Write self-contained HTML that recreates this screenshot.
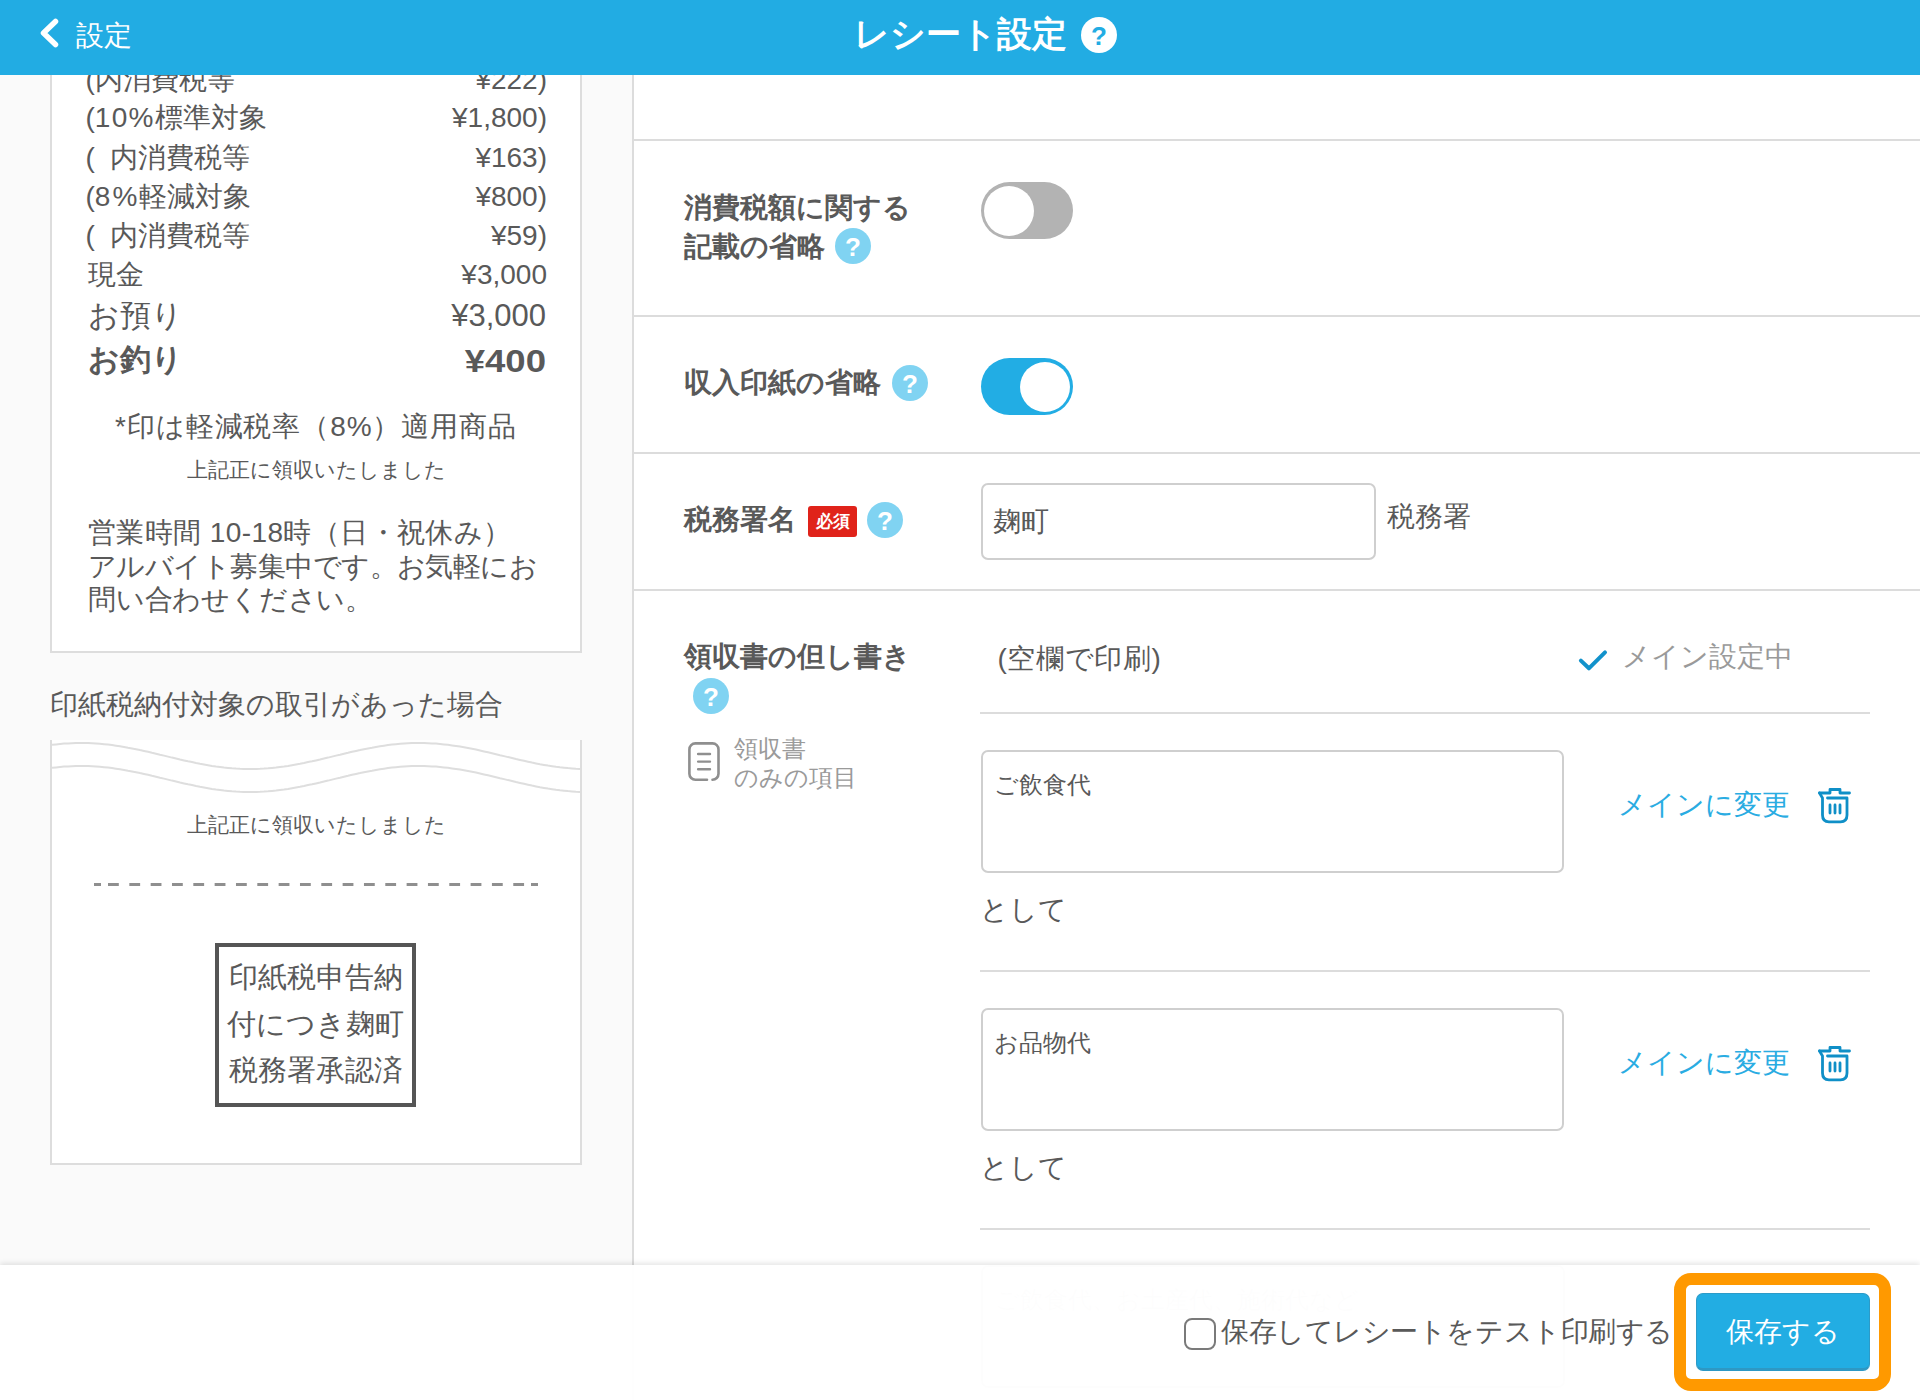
<!DOCTYPE html>
<html lang="ja">
<head>
<meta charset="utf-8">
<style>
html,body{margin:0;padding:0;width:1920px;height:1400px;overflow:hidden;background:#fff;}
body{position:relative;font-family:"Liberation Sans",sans-serif;color:#595959;}
.a{position:absolute;white-space:nowrap;}
.t28{font-size:28px;line-height:40px;height:40px;}
.r{text-align:right;}
.c{text-align:center;}
.b{font-weight:bold;}
#left{position:absolute;left:0;top:0;width:632px;height:1400px;background:#fafafa;}
#vline{position:absolute;left:632px;top:0;width:2px;height:1400px;background:#dcdcdc;}
.hl{position:absolute;height:2px;background:#dcdcdc;}
.card{position:absolute;background:#fff;border:2px solid #dddddd;box-sizing:border-box;}
#header{position:absolute;left:0;top:0;width:1920px;height:75px;background:#22ace3;z-index:10;}
.help{position:absolute;width:36px;height:36px;border-radius:50%;background:#80d3f2;color:#fff;font-weight:bold;font-size:26px;line-height:38px;text-align:center;}
.toggle{position:absolute;width:92px;height:57px;border-radius:29px;box-sizing:border-box;}
.knob{position:absolute;top:3.5px;width:50px;height:50px;border-radius:50%;background:#fff;}
.inp{position:absolute;border:2px solid #cfcfcf;border-radius:7px;box-sizing:border-box;background:#fff;}
.blue{color:#2aace2;}
#bar{position:absolute;left:0;top:1265px;width:1920px;height:135px;background:rgba(255,255,255,0.96);box-shadow:0 -2px 5px rgba(0,0,0,0.10);z-index:20;}
</style>
</head>
<body>
<div id="left"></div>
<div id="vline"></div>

<!-- header -->
<div id="header">
  <svg class="a" style="left:36px;top:14px" width="28" height="38" viewBox="0 0 28 38"><path d="M19.5 7.5 L7.5 19 L19.5 30.5" fill="none" stroke="#fff" stroke-width="5.5" stroke-linecap="round" stroke-linejoin="round"/></svg>
  <div class="a" style="left:76px;top:16px;font-size:28px;line-height:40px;color:#fff">設定</div>
  <div class="a b" style="left:854px;top:14px;font-size:35px;line-height:40px;color:#fff">レシート設定</div>
  <div class="help" style="left:1081px;top:17px;background:#fff;color:#22ace3;">?</div>
</div>

<!-- left receipt card 1 -->
<div class="card" style="left:50px;top:-20px;width:532px;height:673px;"></div>

<!-- receipt rows -->
<div class="a t28" style="left:85.5px;top:60px">(内消費税等</div>
<div class="a t28 r" style="left:300px;width:247px;top:60px">¥222)</div>
<div class="a t28" style="left:85.5px;top:98px">(<span style="letter-spacing:1.3px">10%</span>標準対象</div>
<div class="a t28 r" style="left:300px;width:247px;top:98px">¥1,800)</div>
<div class="a t28" style="left:85.5px;top:138px">(&nbsp;&nbsp;内消費税等</div>
<div class="a t28 r" style="left:300px;width:247px;top:138px">¥163)</div>
<div class="a t28" style="left:85.5px;top:177px">(<span style="letter-spacing:2px">8%</span>軽減対象</div>
<div class="a t28 r" style="left:300px;width:247px;top:177px">¥800)</div>
<div class="a t28" style="left:85.5px;top:216px">(&nbsp;&nbsp;内消費税等</div>
<div class="a t28 r" style="left:300px;width:247px;top:216px">¥59)</div>
<div class="a t28" style="left:88px;top:255px">現金</div>
<div class="a t28 r" style="left:300px;width:247px;top:255px">¥3,000</div>
<div class="a" style="left:88px;top:296px;font-size:31px;line-height:40px">お預り</div>
<div class="a r" style="left:300px;width:246px;top:296px;font-size:31px;line-height:40px">¥3,000</div>
<div class="a b" style="left:88px;top:340px;font-size:31px;line-height:40px">お釣り</div>
<div class="a b r" style="left:300px;width:246px;top:341px;font-size:31.5px;line-height:40px;transform:scaleX(1.16);transform-origin:100% 50%">¥400</div>
<div class="a t28 c" style="left:50px;width:532px;top:407px;letter-spacing:0.9px">*印は軽減税率（8%）適用商品</div>
<div class="a c" style="left:50px;width:532px;top:455px;font-size:21px;line-height:30px">上記正に領収いたしました</div>
<div class="a" style="left:88px;top:516px;font-size:28px;line-height:33.5px"><span style="letter-spacing:0.4px">営業時間 10-18時（日・祝休み）</span><br><span style="letter-spacing:-0.55px">アルバイト募集中です。お気軽にお</span><br><span style="letter-spacing:-0.2px">問い合わせください。</span></div>

<div class="a t28" style="left:50px;top:685px">印紙税納付対象の取引があった場合</div>

<!-- card 2 -->
<div class="card" style="left:50px;top:740px;width:532px;height:425px;border-top:none"></div>
<svg class="a" style="left:52px;top:735px" width="528" height="70" viewBox="52 735 528 70">
  <path id="wv" d="M52,744.8 L56,744.4 L60,744.0 L64,743.6 L68,743.4 L72,743.2 L76,743.1 L80,743.0 L84,743.0 L88,743.1 L92,743.3 L96,743.5 L100,743.8 L104,744.2 L108,744.6 L112,745.1 L116,745.7 L120,746.3 L124,746.9 L128,747.7 L132,748.4 L136,749.2 L140,750.1 L144,750.9 L148,751.8 L152,752.8 L156,753.7 L160,754.7 L164,755.6 L168,756.6 L172,757.6 L176,758.5 L180,759.5 L184,760.4 L188,761.3 L192,762.1 L196,763.0 L200,763.8 L204,764.5 L208,765.2 L212,765.9 L216,766.5 L220,767.0 L224,767.5 L228,767.9 L232,768.3 L236,768.6 L240,768.8 L244,768.9 L248,769.0 L252,769.0 L256,768.9 L260,768.8 L264,768.6 L268,768.3 L272,767.9 L276,767.5 L280,767.0 L284,766.5 L288,765.9 L292,765.2 L296,764.5 L300,763.8 L304,763.0 L308,762.1 L312,761.3 L316,760.4 L320,759.5 L324,758.5 L328,757.6 L332,756.6 L336,755.6 L340,754.7 L344,753.7 L348,752.8 L352,751.8 L356,750.9 L360,750.1 L364,749.2 L368,748.4 L372,747.7 L376,746.9 L380,746.3 L384,745.7 L388,745.1 L392,744.6 L396,744.2 L400,743.8 L404,743.5 L408,743.3 L412,743.1 L416,743.0 L420,743.0 L424,743.1 L428,743.2 L432,743.4 L436,743.6 L440,744.0 L444,744.4 L448,744.8 L452,745.4 L456,746.0 L460,746.6 L464,747.3 L468,748.0 L472,748.8 L476,749.6 L480,750.5 L484,751.4 L488,752.3 L492,753.2 L496,754.2 L500,755.2 L504,756.1 L508,757.1 L512,758.0 L516,759.0 L520,759.9 L524,760.8 L528,761.7 L532,762.6 L536,763.4 L540,764.2 L544,764.9 L548,765.6 L552,766.2 L556,766.8 L560,767.3 L564,767.7 L568,768.1 L572,768.4 L576,768.7 L580,768.9" fill="none" stroke="#dedede" stroke-width="2"/>
  <path id="wv2" d="M52,767.8 L56,767.4 L60,767.0 L64,766.6 L68,766.4 L72,766.2 L76,766.1 L80,766.0 L84,766.0 L88,766.1 L92,766.3 L96,766.5 L100,766.8 L104,767.2 L108,767.6 L112,768.1 L116,768.7 L120,769.3 L124,769.9 L128,770.7 L132,771.4 L136,772.2 L140,773.1 L144,773.9 L148,774.8 L152,775.8 L156,776.7 L160,777.7 L164,778.6 L168,779.6 L172,780.6 L176,781.5 L180,782.5 L184,783.4 L188,784.3 L192,785.1 L196,786.0 L200,786.8 L204,787.5 L208,788.2 L212,788.9 L216,789.5 L220,790.0 L224,790.5 L228,790.9 L232,791.3 L236,791.6 L240,791.8 L244,791.9 L248,792.0 L252,792.0 L256,791.9 L260,791.8 L264,791.6 L268,791.3 L272,790.9 L276,790.5 L280,790.0 L284,789.5 L288,788.9 L292,788.2 L296,787.5 L300,786.8 L304,786.0 L308,785.1 L312,784.3 L316,783.4 L320,782.5 L324,781.5 L328,780.6 L332,779.6 L336,778.6 L340,777.7 L344,776.7 L348,775.8 L352,774.8 L356,773.9 L360,773.1 L364,772.2 L368,771.4 L372,770.7 L376,769.9 L380,769.3 L384,768.7 L388,768.1 L392,767.6 L396,767.2 L400,766.8 L404,766.5 L408,766.3 L412,766.1 L416,766.0 L420,766.0 L424,766.1 L428,766.2 L432,766.4 L436,766.6 L440,767.0 L444,767.4 L448,767.8 L452,768.4 L456,769.0 L460,769.6 L464,770.3 L468,771.0 L472,771.8 L476,772.6 L480,773.5 L484,774.4 L488,775.3 L492,776.2 L496,777.2 L500,778.2 L504,779.1 L508,780.1 L512,781.0 L516,782.0 L520,782.9 L524,783.8 L528,784.7 L532,785.6 L536,786.4 L540,787.2 L544,787.9 L548,788.6 L552,789.2 L556,789.8 L560,790.3 L564,790.7 L568,791.1 L572,791.4 L576,791.7 L580,791.9" fill="none" stroke="#dedede" stroke-width="2"/>
</svg>
<div class="a c" style="left:50px;width:532px;top:810px;font-size:21px;line-height:30px">上記正に領収いたしました</div>
<svg class="a" style="left:0;top:0" width="640" height="900" viewBox="0 0 640 900"><g fill="#8f8f8f"><rect x="94" y="883" width="7" height="3"/><rect x="531" y="883" width="7" height="3"/><rect x="108.00" y="883" width="10.8" height="3"/><rect x="129.33" y="883" width="10.8" height="3"/><rect x="150.66" y="883" width="10.8" height="3"/><rect x="171.99" y="883" width="10.8" height="3"/><rect x="193.32" y="883" width="10.8" height="3"/><rect x="214.65" y="883" width="10.8" height="3"/><rect x="235.98" y="883" width="10.8" height="3"/><rect x="257.31" y="883" width="10.8" height="3"/><rect x="278.64" y="883" width="10.8" height="3"/><rect x="299.97" y="883" width="10.8" height="3"/><rect x="321.30" y="883" width="10.8" height="3"/><rect x="342.63" y="883" width="10.8" height="3"/><rect x="363.96" y="883" width="10.8" height="3"/><rect x="385.29" y="883" width="10.8" height="3"/><rect x="406.62" y="883" width="10.8" height="3"/><rect x="427.95" y="883" width="10.8" height="3"/><rect x="449.28" y="883" width="10.8" height="3"/><rect x="470.61" y="883" width="10.8" height="3"/><rect x="491.94" y="883" width="10.8" height="3"/><rect x="513.27" y="883" width="10.8" height="3"/></g></svg>
<div class="a" style="left:215px;top:943px;width:201px;height:164px;border:4px solid #555;box-sizing:border-box"></div>
<div class="a c" style="left:215px;width:201px;top:954px;font-size:29px;line-height:46.5px">印紙税申告納<br>付につき麹町<br>税務署承認済</div>

<!-- right panel -->
<div class="hl" style="left:634px;width:1286px;top:139px"></div>
<div class="hl" style="left:634px;width:1286px;top:315px"></div>
<div class="hl" style="left:634px;width:1286px;top:452px"></div>
<div class="hl" style="left:634px;width:1286px;top:589px"></div>

<div class="a b" style="left:684px;top:188px;font-size:28px;line-height:39px">消費税額に関する<br>記載の省略</div>
<div class="help" style="left:835px;top:228px">?</div>
<div class="toggle" style="left:981px;top:182px;background:#b3b3b3"><div class="knob" style="left:3px"></div></div>

<div class="a b t28" style="left:684px;top:363px">収入印紙の省略</div>
<div class="help" style="left:892px;top:365px">?</div>
<div class="toggle" style="left:981px;top:358px;background:#22ade4"><div class="knob" style="left:38.5px"></div></div>

<div class="a b t28" style="left:684px;top:500px">税務署名</div>
<div class="a b" style="left:808px;top:506px;width:49px;height:31px;border-radius:3px;background:#e0231a;color:#fff;font-size:17px;line-height:31px;text-align:center">必須</div>
<div class="help" style="left:867px;top:502px">?</div>
<div class="inp" style="left:981px;top:483px;width:395px;height:77px"></div>
<div class="a t28" style="left:993px;top:502px">麹町</div>
<div class="a t28" style="left:1387px;top:497px">税務署</div>

<div class="a b t28" style="left:684px;top:637px">領収書の但し書き</div>
<div class="help" style="left:693px;top:678px">?</div>
<svg class="a" style="left:680px;top:735px" width="50" height="55" viewBox="0 0 50 55">
  <path d="M27 44.8 H15.4 A6 6 0 0 1 9.4 38.8 V14.4 A6 6 0 0 1 15.4 8.4 H32.5 A6 6 0 0 1 38.5 14.4 V38.8 A6 6 0 0 1 32.5 44.8" fill="none" stroke="#8f8f8f" stroke-width="2.6" stroke-linecap="round"/>
  <path d="M18.1 19 H30 M18.1 26.6 H30 M18.1 34.2 H30" stroke="#8f8f8f" stroke-width="2.4" stroke-linecap="round"/>
</svg>
<div class="a" style="left:734px;top:734px;font-size:24px;line-height:29px;color:#9a9a9a">領収書<br>のみの項目</div>

<div class="a t28" style="left:997.5px;top:639px;letter-spacing:0.6px">(空欄で印刷)</div>
<svg class="a" style="left:1570px;top:640px" width="50" height="40" viewBox="0 0 50 40"><path d="M10.9 20.6 L18.9 28.3 L35 12.3" fill="none" stroke="#1292cb" stroke-width="4" stroke-linecap="round" stroke-linejoin="round"/></svg>
<div class="a t28" style="left:1622px;top:637px;color:#9a9a9a">メイン設定中</div>
<div class="hl" style="left:980px;width:890px;top:712px"></div>

<div class="inp" style="left:981px;top:750px;width:583px;height:123px"></div>
<div class="a" style="left:994px;top:770px;font-size:24px;line-height:30px">ご飲食代</div>
<div class="a t28 blue" style="left:1618px;top:785px">メインに変更</div>
<svg class="a" style="left:1810px;top:780px" width="50" height="50" viewBox="0 0 50 50">
  <path d="M9.5 13 H20 V9.5 H30 V13 H39.5" fill="none" stroke="#0f8fc7" stroke-width="2.8" stroke-linecap="round" stroke-linejoin="round"/>
  <path d="M9.5 13 L12.5 18 V35 Q12.5 41.8 19 41.8 H30.5 Q37 41.8 37 35 V18 H17.5" fill="none" stroke="#0f8fc7" stroke-width="2.8" stroke-linecap="round" stroke-linejoin="round"/>
  <path d="M20 25 V33 M25 25 V33 M30 25 V33" stroke="#0f8fc7" stroke-width="2.8" stroke-linecap="round"/>
</svg>
<div class="a t28" style="left:980px;top:890px">として</div>
<div class="hl" style="left:980px;width:890px;top:970px"></div>

<div class="inp" style="left:981px;top:1007.5px;width:583px;height:123px"></div>
<div class="a" style="left:994px;top:1027.5px;font-size:24px;line-height:30px">お品物代</div>
<div class="a t28 blue" style="left:1618px;top:1042.5px">メインに変更</div>
<svg class="a" style="left:1810px;top:1037.5px" width="50" height="50" viewBox="0 0 50 50">
  <path d="M9.5 13 H20 V9.5 H30 V13 H39.5" fill="none" stroke="#0f8fc7" stroke-width="2.8" stroke-linecap="round" stroke-linejoin="round"/>
  <path d="M9.5 13 L12.5 18 V35 Q12.5 41.8 19 41.8 H30.5 Q37 41.8 37 35 V18 H17.5" fill="none" stroke="#0f8fc7" stroke-width="2.8" stroke-linecap="round" stroke-linejoin="round"/>
  <path d="M20 25 V33 M25 25 V33 M30 25 V33" stroke="#0f8fc7" stroke-width="2.8" stroke-linecap="round"/>
</svg>
<div class="a t28" style="left:980px;top:1147.5px">として</div>
<div class="hl" style="left:980px;width:890px;top:1227.5px"></div>

<div class="inp" style="left:981px;top:1265px;width:584px;height:123px"></div>
<div class="a" style="left:995px;top:1285px;font-size:24px;line-height:30px;color:#d0d0d0">ご飲食代、お土産代、施術代など</div>

<!-- bottom bar -->
<div id="bar">
  <div class="a" style="left:1184px;top:53px;width:32px;height:32px;border:2.5px solid #7a7a7a;border-radius:8px;box-sizing:border-box"></div>
  <div class="a t28" style="left:1221px;top:47px;letter-spacing:-0.45px">保存してレシートをテスト印刷する</div>
  <div class="a" style="left:1674px;top:8px;width:217px;height:118px;border:12px solid #ff9900;border-radius:17px;box-sizing:border-box"></div>
  <div class="a" style="left:1696px;top:28px;width:174px;height:78px;border-radius:7px;background:#22ade3;border:1px solid #2c9bc8;border-bottom:3px solid #2e98c4;box-sizing:border-box;color:#fff;font-size:28px;line-height:75px;text-align:center">保存する</div>
</div>
</body>
</html>
